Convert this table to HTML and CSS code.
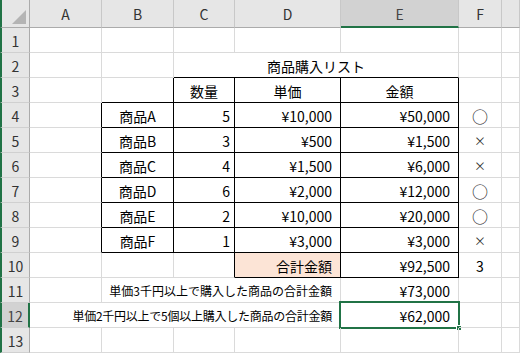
FILE: index.html
```html
<!DOCTYPE html>
<html lang="ja">
<head>
<meta charset="utf-8">
<title>商品購入リスト</title>
<link rel="stylesheet" href="styles.css">
</head>
<body>
<div class="sheet">
  <!-- header row -->
  <div class="corner"><span class="tri"></span></div>
  <div class="ch">A</div>
  <div class="ch">B</div>
  <div class="ch">C</div>
  <div class="ch">D</div>
  <div class="ch sel">E</div>
  <div class="ch">F</div>
  <div class="ch"></div>

  <!-- 1 -->
  <div class="rh">1</div>
  <div class="c"></div><div class="c"></div><div class="c"></div><div class="c"></div><div class="c"></div><div class="c"></div><div class="c"></div>

  <!-- 2 -->
  <div class="rh">2</div>
  <div class="c"></div><div class="c"></div>
  <div class="c m span3 kb">商品購入リスト</div>
  <div class="c"></div><div class="c"></div>

  <!-- 3 -->
  <div class="rh">3</div>
  <div class="c"></div>
  <div class="c kr kb"></div>
  <div class="c m k">数量</div>
  <div class="c m k">単価</div>
  <div class="c m k">金額</div>
  <div class="c"></div><div class="c"></div>

  <!-- 4 -->
  <div class="rh">4</div>
  <div class="c kr"></div>
  <div class="c m k">商品A</div>
  <div class="c r k">5</div>
  <div class="c r k num">¥10,000</div>
  <div class="c r k num">¥50,000</div>
  <div class="c m"><span class="ok">○</span></div>
  <div class="c"></div>

  <!-- 5 -->
  <div class="rh">5</div>
  <div class="c kr"></div>
  <div class="c m k">商品B</div>
  <div class="c r k">3</div>
  <div class="c r k num">¥500</div>
  <div class="c r k num">¥1,500</div>
  <div class="c m"><span class="ng">×</span></div>
  <div class="c"></div>

  <!-- 6 -->
  <div class="rh">6</div>
  <div class="c kr"></div>
  <div class="c m k">商品C</div>
  <div class="c r k">4</div>
  <div class="c r k num">¥1,500</div>
  <div class="c r k num">¥6,000</div>
  <div class="c m"><span class="ng">×</span></div>
  <div class="c"></div>

  <!-- 7 -->
  <div class="rh">7</div>
  <div class="c kr"></div>
  <div class="c m k">商品D</div>
  <div class="c r k">6</div>
  <div class="c r k num">¥2,000</div>
  <div class="c r k num">¥12,000</div>
  <div class="c m"><span class="ok">○</span></div>
  <div class="c"></div>

  <!-- 8 -->
  <div class="rh">8</div>
  <div class="c kr"></div>
  <div class="c m k">商品E</div>
  <div class="c r k">2</div>
  <div class="c r k num">¥10,000</div>
  <div class="c r k num">¥20,000</div>
  <div class="c m"><span class="ok">○</span></div>
  <div class="c"></div>

  <!-- 9 -->
  <div class="rh">9</div>
  <div class="c kr"></div>
  <div class="c m k">商品F</div>
  <div class="c r k">1</div>
  <div class="c r k num">¥3,000</div>
  <div class="c r k num">¥3,000</div>
  <div class="c m"><span class="ng">×</span></div>
  <div class="c"></div>

  <!-- 10 -->
  <div class="rh">10</div>
  <div class="c"></div>
  <div class="c"></div>
  <div class="c kr"></div>
  <div class="c r k num peach">合計金額</div>
  <div class="c r k num">¥92,500</div>
  <div class="c m">3</div>
  <div class="c"></div>

  <!-- 11 -->
  <div class="rh">11</div>
  <div class="c"></div>
  <div class="c r span3 num small">単価3千円以上で購入した商品の合計金額</div>
  <div class="c r num">¥73,000</div>
  <div class="c"></div>
  <div class="c"></div>

  <!-- 12 -->
  <div class="rh sel">12</div>
  <div class="c r span4 num small tight">単価2千円以上で5個以上購入した商品の合計金額</div>
  <div class="c r num active">¥62,000<span class="handle"></span></div>
  <div class="c"></div>
  <div class="c"></div>

  <!-- 13 -->
  <div class="rh">13</div>
  <div class="c"></div><div class="c"></div><div class="c"></div><div class="c"></div><div class="c"></div><div class="c"></div><div class="c"></div>
</div>
</body>
</html>
```
FILE: styles.css
```css
* {
  box-sizing: border-box;
  margin: 0;
  padding: 0;
}

html, body {
  margin: 0;
  background: #ffffff;
}

body {
  font-family: "Noto Sans CJK JP", "Noto Sans", sans-serif;
  font-size: 14px;
  color: #000000;
}

.sheet {
  display: grid;
  grid-template-columns: 30px 72px 72px 61px 106px 118px 43px 18px;
  grid-template-rows: 28px repeat(13, 25px);
  width: 520px;
  height: 353px;
  overflow: hidden;
}

.corner {
  position: relative;
  background: #e6e6e6;
  border-left: 2px solid #217346;
  border-right: 1px solid #ababab;
  border-bottom: 1px solid #ababab;
}

.tri {
  position: absolute;
  right: 3px;
  bottom: 3px;
  width: 0;
  height: 0;
  border-left: 14px solid transparent;
  border-bottom: 14px solid #b4b4b4;
}

.ch {
  display: flex;
  align-items: center;
  justify-content: center;
  background: #e6e6e6;
  border-right: 1px solid #c8c8c8;
  border-bottom: 1px solid #ababab;
  color: #333333;
  font-size: 14px;
  padding-top: 1px;
}

.ch.sel {
  background: #d2d2d2;
  border-bottom: 2px solid #217346;
  color: #444444;
}

.rh {
  display: flex;
  align-items: center;
  justify-content: center;
  background: #e6e6e6;
  border-left: 2px solid #217346;
  border-right: 1px solid #ababab;
  border-bottom: 1px solid #d0d0d0;
  color: #333333;
  font-size: 14px;
  padding-top: 1px;
}

.rh.sel {
  background: #d2d2d2;
  border-right: 2px solid #217346;
  color: #444444;
}

.c {
  display: flex;
  align-items: center;
  padding: 2px 4px 0 4px;
  border-right: 1px solid #dadada;
  border-bottom: 1px solid #dadada;
  white-space: nowrap;
  line-height: 1;
  position: relative;
}

.m { justify-content: center; }
.r { justify-content: flex-end; }
.num { padding-right: 8px; }

.span3 { grid-column: span 3; }
.span4 { grid-column: span 4; }

.k {
  border-right-color: #000000;
  border-bottom-color: #000000;
}
.kr { border-right-color: #000000; }
.kb { border-bottom-color: #000000; }

.peach { background: #fce4d6; }

.small { font-size: 12px; }
.tight { letter-spacing: -0.25px; }

.ok { font-size: 16px; color: #222222; }
.ng { font-size: 12px; color: #333333; }

.active::before {
  content: "";
  position: absolute;
  left: -2px;
  top: -2px;
  right: -2px;
  bottom: -2px;
  border: 2px solid #217346;
}

.handle {
  position: absolute;
  right: -4px;
  bottom: -4px;
  width: 6px;
  height: 6px;
  background: #217346;
  border: 1px solid #ffffff;
}
```
